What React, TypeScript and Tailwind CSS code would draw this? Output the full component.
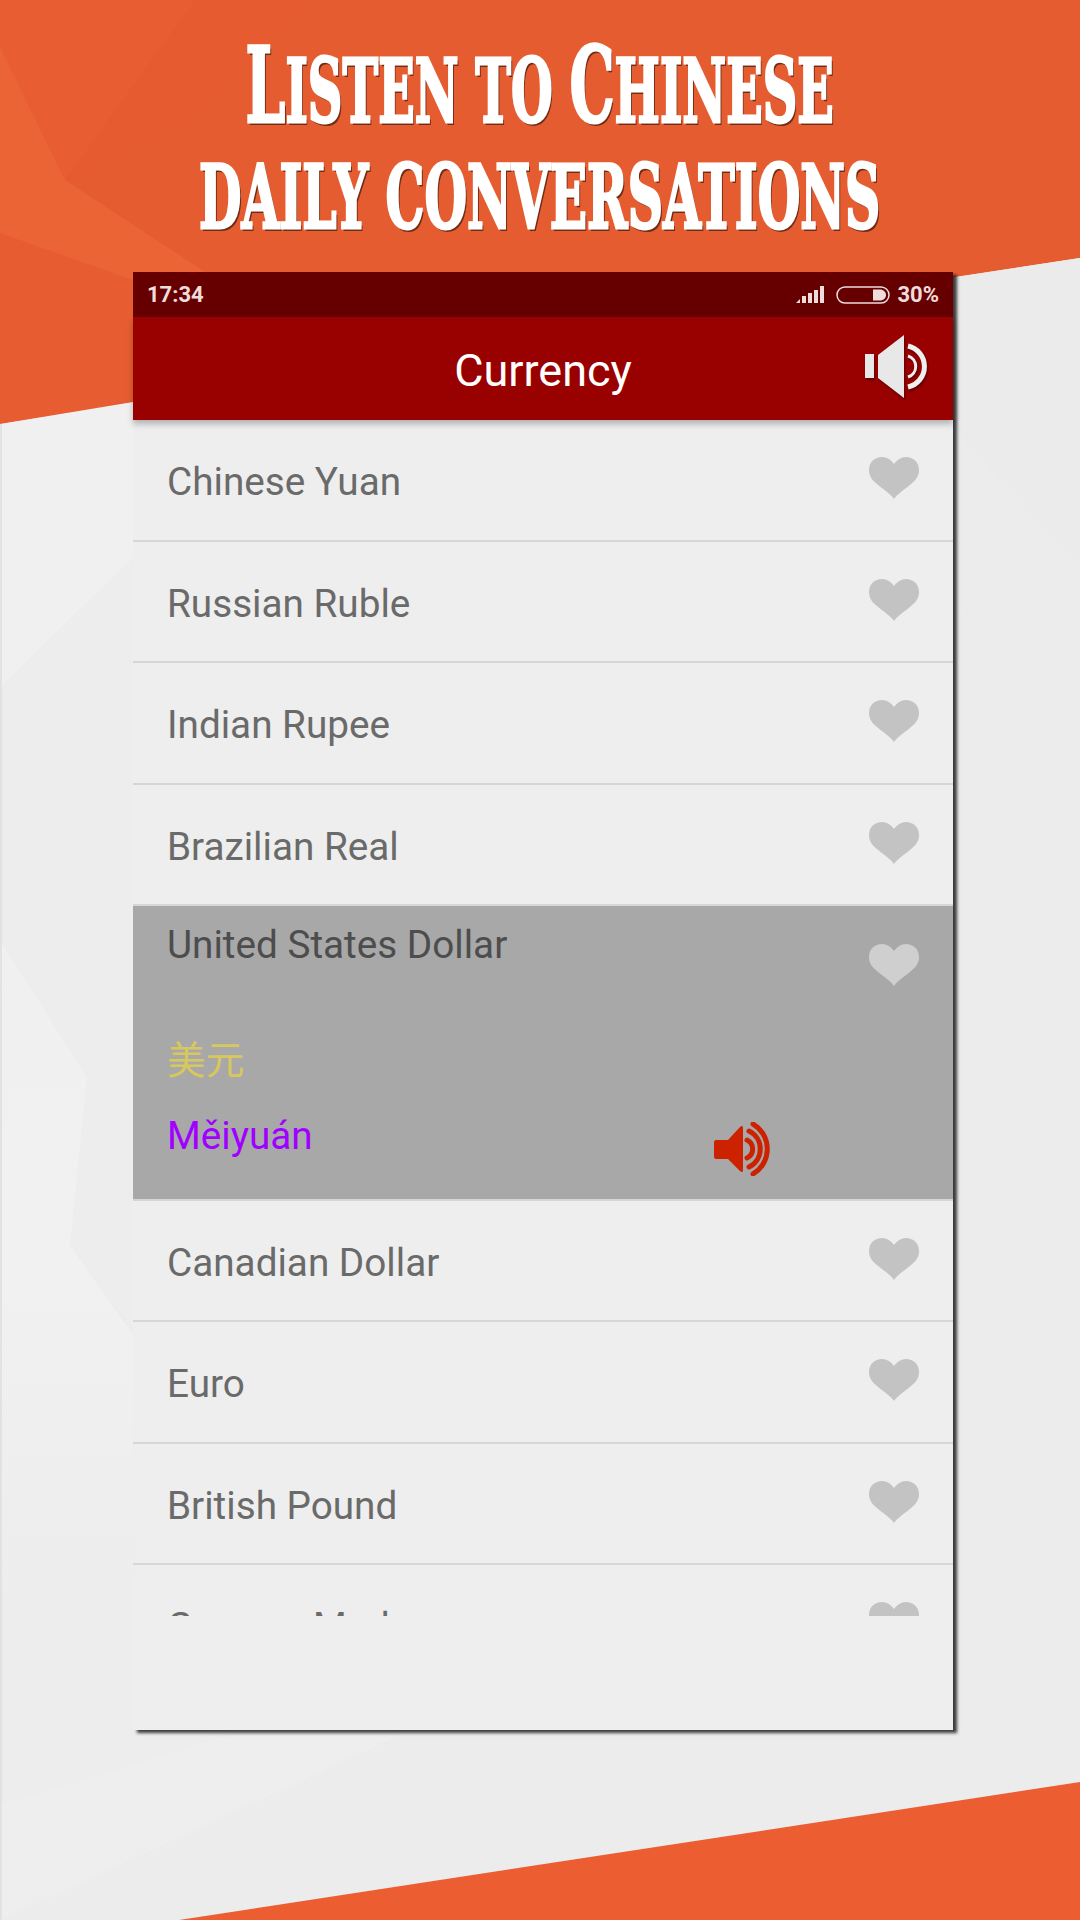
const items = ["Chinese Yuan", "Russian Ruble", "Indian Rupee", "Brazilian Real"];
const itemsAfter = ["Canadian Dollar", "Euro", "British Pound", "German Mark"];

const Heart = ({ className }: { className: string }) => (
  <svg viewBox="0 0 50 42" className={className} fill="currentColor">
    <path d="M25 42C22 37 15 33 8 27C3 23 0 19 0 13C0 5 6 0 13 0C18 0 22 3 25 7C28 3 32 0 37 0C44 0 50 5 50 13C50 19 47 23 42 27C35 33 28 37 25 42Z" />
  </svg>
);

const Background = () => (
  <svg viewBox="0 0 1080 1920" className="absolute inset-0 w-[1080px] h-[1920px]">
    <defs>
      <linearGradient id="leftFacet" x1="0" y1="940" x2="0" y2="1600" gradientUnits="userSpaceOnUse">
        <stop offset="0" stopColor="#f0f0f0" />
        <stop offset="0.5" stopColor="#f1f1f1" />
        <stop offset="1" stopColor="#ededed" />
      </linearGradient>
    </defs>
    <rect width="1080" height="1920" fill="#ececec" />
    <polygon points="0,0 1080,0 1080,258 0,424" fill="#e55c30" />
    <polygon points="0,0 195,0 65,180 0,47" fill="#e85e32" />
    <polygon points="0,47 65,180 205,272 133,285 0,233" fill="#eb6436" />
    <polygon points="0,233 133,280 133,402 0,424" fill="#e75d31" />
    <polygon points="65,180 195,0 310,0 200,110" fill="#e65c30" />
    <polygon points="0,424 133,402 133,558 0,688" fill="#f0f0f0" />
    <polygon points="0,688 133,558 133,1330 70,1245 87,1077 0,940" fill="#ededed" />
    <polygon points="0,940 87,1077 70,1245 133,1335 133,1600 0,1600" fill="url(#leftFacet)" />
    <polygon points="0,1600 133,1600 133,1730 230,1735 0,1805" fill="#ededed" />
    <polygon points="955,430 1080,570 1080,700 955,600" fill="#ececec" />
    <polygon points="955,277 1080,258 1080,570 955,430" fill="#ebebeb" />
    <polygon points="0,1805 230,1735 400,1735 0,1920" fill="#eeeeee" />
    <rect x="0" y="424" width="2" height="1496" fill="#e2e2e2" />
    <polygon points="1080,1782 179,1920 1080,1920" fill="#ec5e32" />
  </svg>
);

const Row = ({ label }: { label: string }) => (
  <div className="h-[121.5px] shrink-0 flex items-start justify-between pl-[34px] pr-[34px] border-b-2 border-[#d6d6d6]">
    <span className="mt-[39px] text-[38.7px] leading-[46px] text-[#6a6a6a]">{label}</span>
    <Heart className="mt-[37px] w-[50px] h-[42px] text-[#c3c3c3]" />
  </div>
);

export default function App() {
  return (
    <div className="relative w-[1080px] h-[1920px] overflow-hidden font-['Roboto',sans-serif]">
      <Background />
      <div className="relative flex flex-col">
        <header className="h-[272px] shrink-0 flex flex-col items-center text-white font-['DejaVu_Serif',serif] font-bold [-webkit-text-stroke:3px_white] [text-shadow:3px_3px_0_#6e2c14] whitespace-nowrap">
          <div className="h-[118px] pt-[36px] text-[88px] leading-[100px] scale-x-[0.545]">
            <span className="text-[104px]">L</span>
            <span className="uppercase">isten to </span>
            <span className="text-[104px]">C</span>
            <span className="uppercase">hinese</span>
          </div>
          <div className="h-[118px] pt-[29px] text-[88px] leading-[100px] scale-x-[0.556]">DAILY CONVERSATIONS</div>
        </header>

        <main className="ml-[133px] w-[820px] h-[1458px] flex flex-col bg-[#eeeeee] shadow-[4px_3px_3px_rgba(0,0,0,0.75)]">
          <div className="h-[45px] shrink-0 flex items-center justify-between pl-[14px] pr-[14px] bg-[#660000] text-[22px] font-bold text-[#efdcdc]">
            <span>17:34</span>
            <div className="flex items-center">
              <svg viewBox="0 0 28 17" className="w-[28px] h-[17px]" fill="#efdcdc">
                <polygon points="0,17 4,13 4,17" />
                <rect x="6" y="10" width="4" height="7" />
                <rect x="12" y="7" width="4" height="10" />
                <rect x="18" y="4" width="4" height="13" />
                <rect x="24" y="0" width="4" height="17" />
              </svg>
              <svg viewBox="0 0 54 18" className="ml-[12px] w-[54px] h-[18px]">
                <rect x="1" y="1" width="52" height="16" rx="8" fill="none" stroke="#efdcdc" strokeWidth="1.5" />
                <path d="M37 3.5H44C47.5 3.5 50 6 50 9C50 12 47.5 14.5 44 14.5H37Z" fill="#efdcdc" />
              </svg>
              <span className="ml-[7px]">30%</span>
            </div>
          </div>

          <div className="relative z-10 h-[103px] shrink-0 flex items-center justify-center bg-[#990000] shadow-[0_4px_6px_rgba(0,0,0,0.25)]">
            <span className="mt-[4px] text-[45px] leading-[50px] text-white">Currency</span>
            <svg viewBox="0 0 62 63" className="absolute right-[26px] top-[18px] w-[62px] h-[63px] drop-shadow-[1px_2px_1px_rgba(70,0,0,0.7)]">
              <rect x="0" y="19" width="9" height="24" fill="#e8e8e8" />
              <polygon points="13,20 39,0 39,63 13,43" fill="#e8e8e8" />
              <path d="M43 11A21 21 0 0 1 43 52" fill="none" stroke="#efefef" strokeWidth="5" />
              <path d="M43 21A11 11 0 0 1 43 42" fill="none" stroke="#efefef" strokeWidth="3" />
            </svg>
          </div>

          <div className="h-[1196px] shrink-0 flex flex-col overflow-hidden">
            {items.map((item) => (
              <Row key={item} label={item} />
            ))}

            <div className="h-[294.5px] shrink-0 flex items-start justify-between pl-[34px] pr-[34px] bg-[#a8a8a8] border-b-2 border-[#d6d6d6]">
              <div className="w-[606px] flex flex-col">
                <span className="mt-[16px] text-[38.7px] leading-[46px] text-[#4d4d4d]">United States Dollar</span>
                <span className="mt-[64px] text-[38.7px] leading-[50px] text-[#d6c75f] font-['Noto_Sans_CJK_SC',sans-serif]">美元</span>
                <div className="mt-[31px] flex items-start justify-between">
                  <span className="text-[38.7px] leading-[46px] text-[#a000ff]">Měiyuán</span>
                  <svg viewBox="0 0 58 54" className="mt-[9px] w-[60px] h-[54px]">
                    <path d="M2 18H14L26 5C28 3 29 4 29 6V48C29 50 28 51 26 49L14 37H2C1 37 0 36 0 35V20C0 19 1 18 2 18Z" fill="#cc2200" />
                    <path d="M33 18A10 10 0 0 1 33 36" fill="none" stroke="#cc2200" strokeWidth="5" strokeLinecap="round" />
                    <path d="M35 9A20 20 0 0 1 35 45" fill="none" stroke="#cc2200" strokeWidth="5" strokeLinecap="round" />
                    <path d="M39 2A29 29 0 0 1 39 52" fill="none" stroke="#cc2200" strokeWidth="5" strokeLinecap="round" />
                  </svg>
                </div>
              </div>
              <Heart className="mt-[38px] w-[50px] h-[42px] text-[#cfcfcf]" />
            </div>

            {itemsAfter.map((item) => (
              <Row key={item} label={item} />
            ))}
          </div>
        </main>
      </div>
    </div>
  );
}
